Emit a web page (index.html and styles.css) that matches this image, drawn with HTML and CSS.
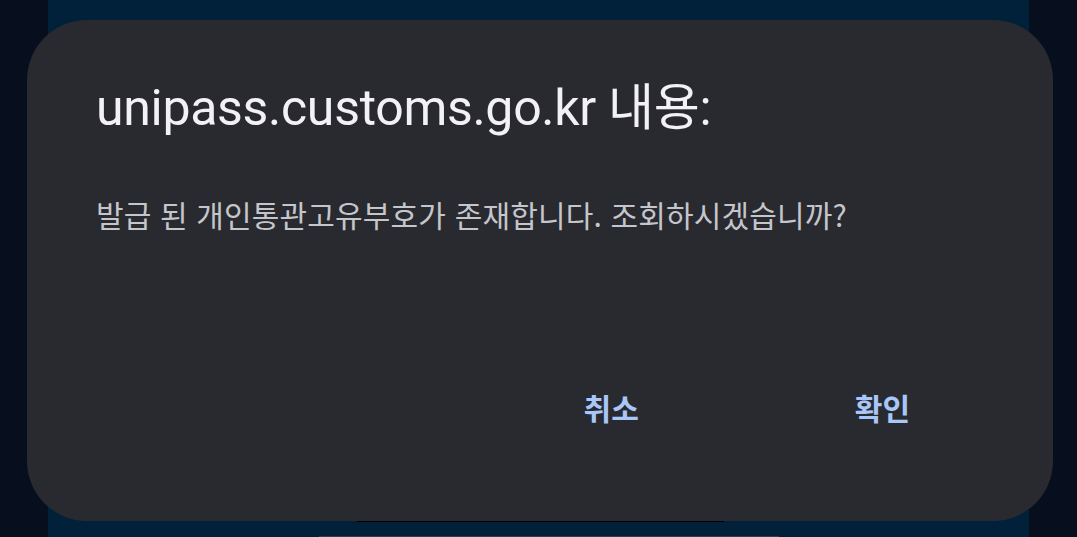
FILE: index.html
```html
<!DOCTYPE html>
<html lang="ko">
<head>
    <meta charset="UTF-8">
    <meta name="viewport" content="width=device-width, initial-scale=1.0">
    <title>unipass.customs.go.kr</title>
    <link rel="stylesheet" href="styles.css">
</head>
<body>
    <div class="page">
        <div class="side"></div>
        <div class="center">
            <div class="bottom-bar"></div>
        </div>
        <div class="side"></div>
    </div>

    <div class="dialog">
        <h2 class="dialog-title">unipass.customs.go.kr 내용:</h2>
        <p class="dialog-message">발급 된 개인통관고유부호가 존재합니다. 조회하시겠습니까?</p>
        <div class="dialog-actions">
            <button class="action">취소</button>
            <button class="action">확인</button>
        </div>
    </div>
</body>
</html>
```

FILE: styles.css
```css
body {
    margin: 0;
    height: 537px;
    overflow: hidden;
    font-family: Roboto, "Noto Sans", "Noto Sans CJK KR", sans-serif;
    background: #070f1e;
}

.page {
    display: flex;
    height: 100%;
}

.side {
    width: 48px;
    background: #070f1e;
}

.center {
    flex: 1;
    background: #01203a;
    display: flex;
    align-items: flex-end;
    justify-content: center;
}

.bottom-bar {
    width: 460px;
    height: 1px;
    margin-left: 20px;
    background: #3a3f46;
}

/* 알림 대화상자 */
.dialog {
    position: absolute;
    left: 27px;
    top: 20px;
    width: 1026px;
    height: 501px;
    box-sizing: border-box;
    padding: 0 143px 0 69px;
    background: #292a2f;
    border-radius: 60px;
    display: flex;
    flex-direction: column;
}

.dialog::after {
    content: "";
    position: absolute;
    left: 330px;
    bottom: -1px;
    width: 367px;
    height: 1px;
    background: #000;
}

.dialog-title {
    margin: 58px 0 0;
    font-size: 50px;
    font-weight: 400;
    line-height: 60px;
    color: #f3f1f6;
    letter-spacing: -0.3px;
}

.dialog-message {
    margin: 56px 0 0;
    font-size: 30px;
    line-height: 40px;
    color: #c5c6cc;
    letter-spacing: 0.15px;
    font-family: "Noto Sans CJK KR", sans-serif;
}

.dialog-actions {
    margin-top: auto;
    margin-bottom: 94px;
    display: flex;
    justify-content: flex-end;
    gap: 216px;
}

.action {
    padding: 0;
    border: none;
    background: none;
    font-family: "Noto Sans CJK KR", sans-serif;
    font-size: 30px;
    font-weight: 700;
    line-height: 40px;
    color: #a9c6f8;
    cursor: pointer;
}
```
